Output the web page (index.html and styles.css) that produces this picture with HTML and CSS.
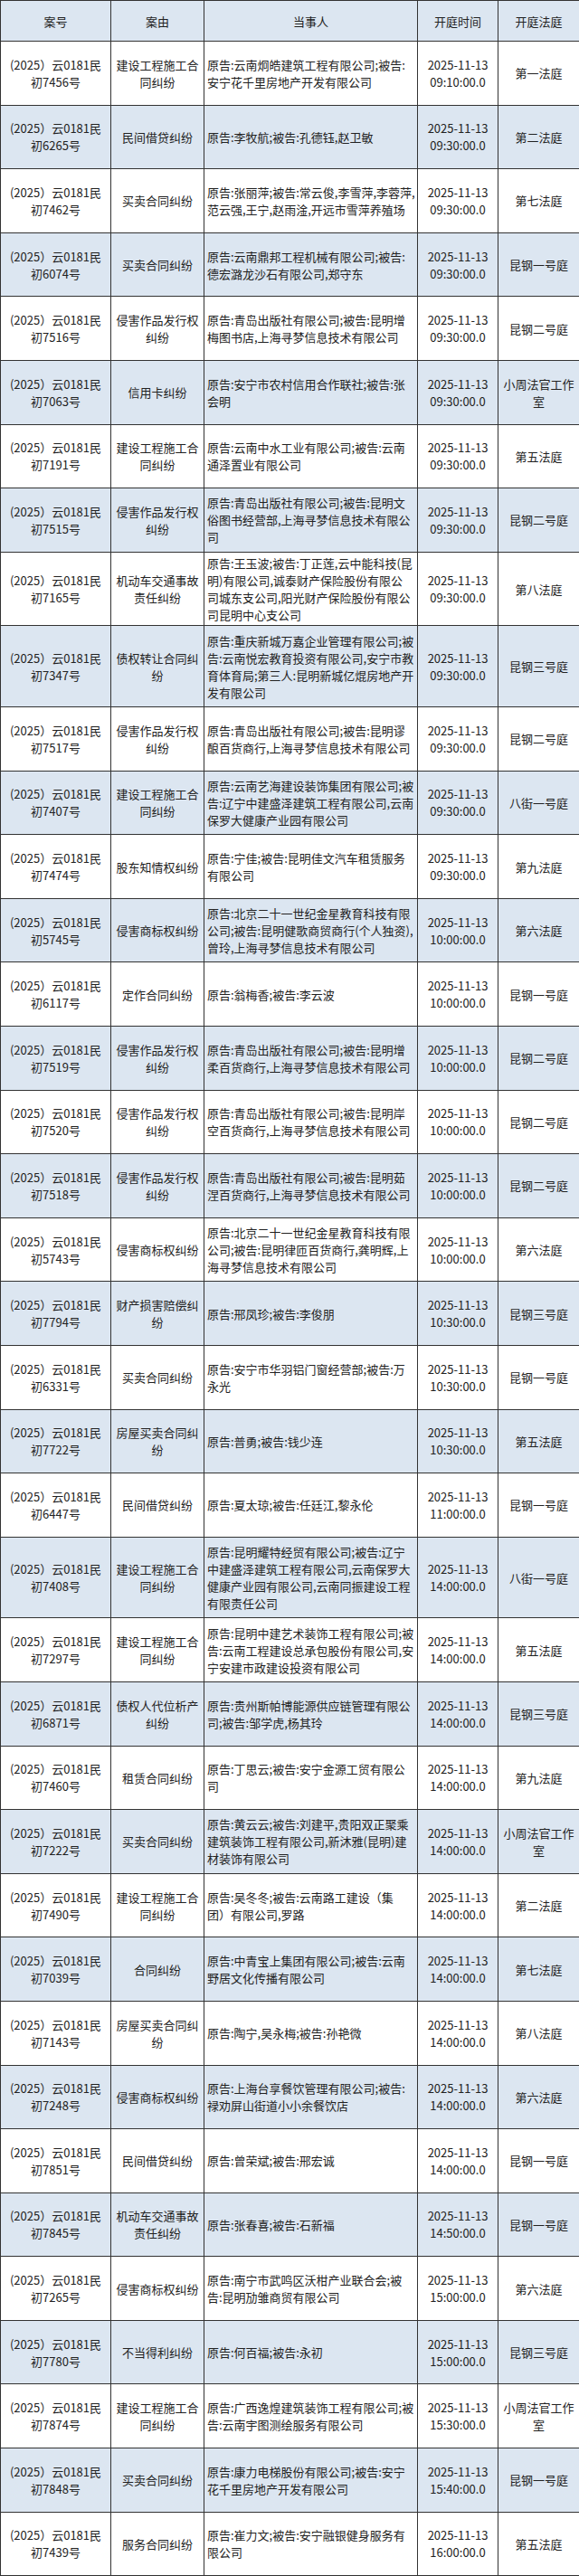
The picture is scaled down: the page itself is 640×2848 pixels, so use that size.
FILE: index.html
```html
<!DOCTYPE html>
<html lang="zh-CN">
<head>
<meta charset="utf-8">
<title>开庭公告</title>
<link rel="stylesheet" href="styles.css">
</head>
<body>
<table class="schedule">
  <colgroup>
    <col class="c-no">
    <col class="c-cause">
    <col class="c-party">
    <col class="c-time">
    <col class="c-room">
  </colgroup>
  <thead>
    <tr><th>案号</th><th>案由</th><th>当事人</th><th>开庭时间</th><th>开庭法庭</th></tr>
  </thead>
  <tbody>
    <tr><td>(2025）云0181民<br>初7456号</td><td>建设工程施工合同纠纷</td><td class="party">原告:云南炯皓建筑工程有限公司;被告:<br>安宁花千里房地产开发有限公司</td><td>2025-11-13<br>09:10:00.0</td><td>第一法庭</td></tr>
    <tr><td>(2025）云0181民<br>初6265号</td><td>民间借贷纠纷</td><td class="party">原告:李牧航;被告:孔德钰,赵卫敏</td><td>2025-11-13<br>09:30:00.0</td><td>第二法庭</td></tr>
    <tr><td>(2025）云0181民<br>初7462号</td><td>买卖合同纠纷</td><td class="party">原告:张丽萍;被告:常云俊,李雪萍,李蓉萍,<br>范云强,王宁,赵雨淦,开远市雪萍养殖场</td><td>2025-11-13<br>09:30:00.0</td><td>第七法庭</td></tr>
    <tr><td>(2025）云0181民<br>初6074号</td><td>买卖合同纠纷</td><td class="party">原告:云南鼎邦工程机械有限公司;被告:<br>德宏潞龙沙石有限公司,郑守东</td><td>2025-11-13<br>09:30:00.0</td><td>昆钢一号庭</td></tr>
    <tr><td>(2025）云0181民<br>初7516号</td><td>侵害作品发行权纠纷</td><td class="party">原告:青岛出版社有限公司;被告:昆明增<br>梅图书店,上海寻梦信息技术有限公司</td><td>2025-11-13<br>09:30:00.0</td><td>昆钢二号庭</td></tr>
    <tr><td>(2025）云0181民<br>初7063号</td><td>信用卡纠纷</td><td class="party">原告:安宁市农村信用合作联社;被告:张<br>会明</td><td>2025-11-13<br>09:30:00.0</td><td>小周法官工作室</td></tr>
    <tr><td>(2025）云0181民<br>初7191号</td><td>建设工程施工合同纠纷</td><td class="party">原告:云南中水工业有限公司;被告:云南<br>通泽置业有限公司</td><td>2025-11-13<br>09:30:00.0</td><td>第五法庭</td></tr>
    <tr><td>(2025）云0181民<br>初7515号</td><td>侵害作品发行权纠纷</td><td class="party">原告:青岛出版社有限公司;被告:昆明文<br>俗图书经营部,上海寻梦信息技术有限公<br>司</td><td>2025-11-13<br>09:30:00.0</td><td>昆钢二号庭</td></tr>
    <tr class="tall-a"><td>(2025）云0181民<br>初7165号</td><td>机动车交通事故责任纠纷</td><td class="party">原告:王玉波;被告:丁正莲,云中能科技(昆<br>明)有限公司,诚泰财产保险股份有限公<br>司城东支公司,阳光财产保险股份有限公<br>司昆明中心支公司</td><td>2025-11-13<br>09:30:00.0</td><td>第八法庭</td></tr>
    <tr class="tall-b"><td>(2025）云0181民<br>初7347号</td><td>债权转让合同纠纷</td><td class="party">原告:重庆新城万嘉企业管理有限公司;被<br>告:云南悦宏教育投资有限公司,安宁市教<br>育体育局;第三人:昆明新城亿焜房地产开<br>发有限公司</td><td>2025-11-13<br>09:30:00.0</td><td>昆钢三号庭</td></tr>
    <tr><td>(2025）云0181民<br>初7517号</td><td>侵害作品发行权纠纷</td><td class="party">原告:青岛出版社有限公司;被告:昆明谬<br>酿百货商行,上海寻梦信息技术有限公司</td><td>2025-11-13<br>09:30:00.0</td><td>昆钢二号庭</td></tr>
    <tr><td>(2025）云0181民<br>初7407号</td><td>建设工程施工合同纠纷</td><td class="party">原告:云南艺海建设装饰集团有限公司;被<br>告:辽宁中建盛泽建筑工程有限公司,云南<br>保罗大健康产业园有限公司</td><td>2025-11-13<br>09:30:00.0</td><td>八街一号庭</td></tr>
    <tr><td>(2025）云0181民<br>初7474号</td><td>股东知情权纠纷</td><td class="party">原告:宁佳;被告:昆明佳文汽车租赁服务<br>有限公司</td><td>2025-11-13<br>09:30:00.0</td><td>第九法庭</td></tr>
    <tr><td>(2025）云0181民<br>初5745号</td><td>侵害商标权纠纷</td><td class="party">原告:北京二十一世纪金星教育科技有限<br>公司;被告:昆明健歌商贸商行(个人独资),<br>曾玲,上海寻梦信息技术有限公司</td><td>2025-11-13<br>10:00:00.0</td><td>第六法庭</td></tr>
    <tr><td>(2025）云0181民<br>初6117号</td><td>定作合同纠纷</td><td class="party">原告:翁梅香;被告:李云波</td><td>2025-11-13<br>10:00:00.0</td><td>昆钢一号庭</td></tr>
    <tr><td>(2025）云0181民<br>初7519号</td><td>侵害作品发行权纠纷</td><td class="party">原告:青岛出版社有限公司;被告:昆明增<br>柔百货商行,上海寻梦信息技术有限公司</td><td>2025-11-13<br>10:00:00.0</td><td>昆钢二号庭</td></tr>
    <tr><td>(2025）云0181民<br>初7520号</td><td>侵害作品发行权纠纷</td><td class="party">原告:青岛出版社有限公司;被告:昆明岸<br>空百货商行,上海寻梦信息技术有限公司</td><td>2025-11-13<br>10:00:00.0</td><td>昆钢二号庭</td></tr>
    <tr><td>(2025）云0181民<br>初7518号</td><td>侵害作品发行权纠纷</td><td class="party">原告:青岛出版社有限公司;被告:昆明茹<br>涅百货商行,上海寻梦信息技术有限公司</td><td>2025-11-13<br>10:00:00.0</td><td>昆钢二号庭</td></tr>
    <tr><td>(2025）云0181民<br>初5743号</td><td>侵害商标权纠纷</td><td class="party">原告:北京二十一世纪金星教育科技有限<br>公司;被告:昆明律匝百货商行,龚明辉,上<br>海寻梦信息技术有限公司</td><td>2025-11-13<br>10:00:00.0</td><td>第六法庭</td></tr>
    <tr><td>(2025）云0181民<br>初7794号</td><td>财产损害赔偿纠纷</td><td class="party">原告:邢凤珍;被告:李俊朋</td><td>2025-11-13<br>10:30:00.0</td><td>昆钢三号庭</td></tr>
    <tr><td>(2025）云0181民<br>初6331号</td><td>买卖合同纠纷</td><td class="party">原告:安宁市华羽铝门窗经营部;被告:万<br>永光</td><td>2025-11-13<br>10:30:00.0</td><td>昆钢一号庭</td></tr>
    <tr><td>(2025）云0181民<br>初7722号</td><td>房屋买卖合同纠纷</td><td class="party">原告:普勇;被告:钱少连</td><td>2025-11-13<br>10:30:00.0</td><td>第五法庭</td></tr>
    <tr><td>(2025）云0181民<br>初6447号</td><td>民间借贷纠纷</td><td class="party">原告:夏太琼;被告:任廷江,黎永伦</td><td>2025-11-13<br>11:00:00.0</td><td>昆钢一号庭</td></tr>
    <tr class="tall-b"><td>(2025）云0181民<br>初7408号</td><td>建设工程施工合同纠纷</td><td class="party">原告:昆明耀特经贸有限公司;被告:辽宁<br>中建盛泽建筑工程有限公司,云南保罗大<br>健康产业园有限公司,云南同振建设工程<br>有限责任公司</td><td>2025-11-13<br>14:00:00.0</td><td>八街一号庭</td></tr>
    <tr><td>(2025）云0181民<br>初7297号</td><td>建设工程施工合同纠纷</td><td class="party">原告:昆明中建艺术装饰工程有限公司;被<br>告:云南工程建设总承包股份有限公司,安<br>宁安建市政建设投资有限公司</td><td>2025-11-13<br>14:00:00.0</td><td>第五法庭</td></tr>
    <tr><td>(2025）云0181民<br>初6871号</td><td>债权人代位析产纠纷</td><td class="party">原告:贵州斯帕博能源供应链管理有限公<br>司;被告:邹学虎,杨其玲</td><td>2025-11-13<br>14:00:00.0</td><td>昆钢三号庭</td></tr>
    <tr><td>(2025）云0181民<br>初7460号</td><td>租赁合同纠纷</td><td class="party">原告:丁思云;被告:安宁金源工贸有限公<br>司</td><td>2025-11-13<br>14:00:00.0</td><td>第九法庭</td></tr>
    <tr><td>(2025）云0181民<br>初7222号</td><td>买卖合同纠纷</td><td class="party">原告:黄云云;被告:刘建平,贵阳双正聚乘<br>建筑装饰工程有限公司,新沐雅(昆明)建<br>材装饰有限公司</td><td>2025-11-13<br>14:00:00.0</td><td>小周法官工作室</td></tr>
    <tr><td>(2025）云0181民<br>初7490号</td><td>建设工程施工合同纠纷</td><td class="party">原告:吴冬冬;被告:云南路工建设（集<br>团）有限公司,罗路</td><td>2025-11-13<br>14:00:00.0</td><td>第二法庭</td></tr>
    <tr><td>(2025）云0181民<br>初7039号</td><td>合同纠纷</td><td class="party">原告:中青宝上集团有限公司;被告:云南<br>野居文化传播有限公司</td><td>2025-11-13<br>14:00:00.0</td><td>第七法庭</td></tr>
    <tr><td>(2025）云0181民<br>初7143号</td><td>房屋买卖合同纠纷</td><td class="party">原告:陶宁,吴永梅;被告:孙艳微</td><td>2025-11-13<br>14:00:00.0</td><td>第八法庭</td></tr>
    <tr><td>(2025）云0181民<br>初7248号</td><td>侵害商标权纠纷</td><td class="party">原告:上海台享餐饮管理有限公司;被告:<br>禄劝屏山街道小小余餐饮店</td><td>2025-11-13<br>14:00:00.0</td><td>第六法庭</td></tr>
    <tr><td>(2025）云0181民<br>初7851号</td><td>民间借贷纠纷</td><td class="party">原告:曾荣斌;被告:邢宏诚</td><td>2025-11-13<br>14:00:00.0</td><td>昆钢一号庭</td></tr>
    <tr><td>(2025）云0181民<br>初7845号</td><td>机动车交通事故责任纠纷</td><td class="party">原告:张春喜;被告:石新福</td><td>2025-11-13<br>14:50:00.0</td><td>昆钢一号庭</td></tr>
    <tr><td>(2025）云0181民<br>初7265号</td><td>侵害商标权纠纷</td><td class="party">原告:南宁市武鸣区沃柑产业联合会;被<br>告:昆明劢雏商贸有限公司</td><td>2025-11-13<br>15:00:00.0</td><td>第六法庭</td></tr>
    <tr><td>(2025）云0181民<br>初7780号</td><td>不当得利纠纷</td><td class="party">原告:何百福;被告:永初</td><td>2025-11-13<br>15:00:00.0</td><td>昆钢三号庭</td></tr>
    <tr><td>(2025）云0181民<br>初7874号</td><td>建设工程施工合同纠纷</td><td class="party">原告:广西逸煌建筑装饰工程有限公司;被<br>告:云南宇图测绘服务有限公司</td><td>2025-11-13<br>15:30:00.0</td><td>小周法官工作室</td></tr>
    <tr><td>(2025）云0181民<br>初7848号</td><td>买卖合同纠纷</td><td class="party">原告:康力电梯股份有限公司;被告:安宁<br>花千里房地产开发有限公司</td><td>2025-11-13<br>15:40:00.0</td><td>昆钢一号庭</td></tr>
    <tr><td>(2025）云0181民<br>初7439号</td><td>服务合同纠纷</td><td class="party">原告:崔力文;被告:安宁融银健身服务有<br>限公司</td><td>2025-11-13<br>16:00:00.0</td><td>第五法庭</td></tr>
  </tbody>
</table>
</body>
</html>
```

FILE: styles.css
```css
html, body {
  margin: 0;
  padding: 0;
  background: #ffffff;
}

body {
  font-family: "Noto Sans CJK SC", "Noto Sans", sans-serif;
  font-size: 13px;
  line-height: 19px;
  color: #222222;
}

.schedule {
  width: 640px;
  table-layout: fixed;
  border-collapse: collapse;
}

.c-no { width: 122px; }
.c-cause { width: 103px; }
.c-party { width: 236px; }
.c-time { width: 89px; }
.c-room { width: 90px; }

.schedule th,
.schedule td {
  border: 1px solid #333333;
  padding: 2px 2px;
  text-align: center;
  vertical-align: middle;
  font-weight: normal;
  word-break: break-all;
}

.schedule thead tr {
  height: 45px;
  background: #dce6f1;
}

.schedule tbody tr {
  height: 70.6px;
}

.schedule tbody tr:nth-child(even) {
  background: #dce6f1;
}

.schedule tbody tr.tall-a {
  height: 81.7px;
}

.schedule tbody tr.tall-b {
  height: 89.6px;
}

.schedule td.party {
  text-align: left;
  padding-left: 3px;
}
```
